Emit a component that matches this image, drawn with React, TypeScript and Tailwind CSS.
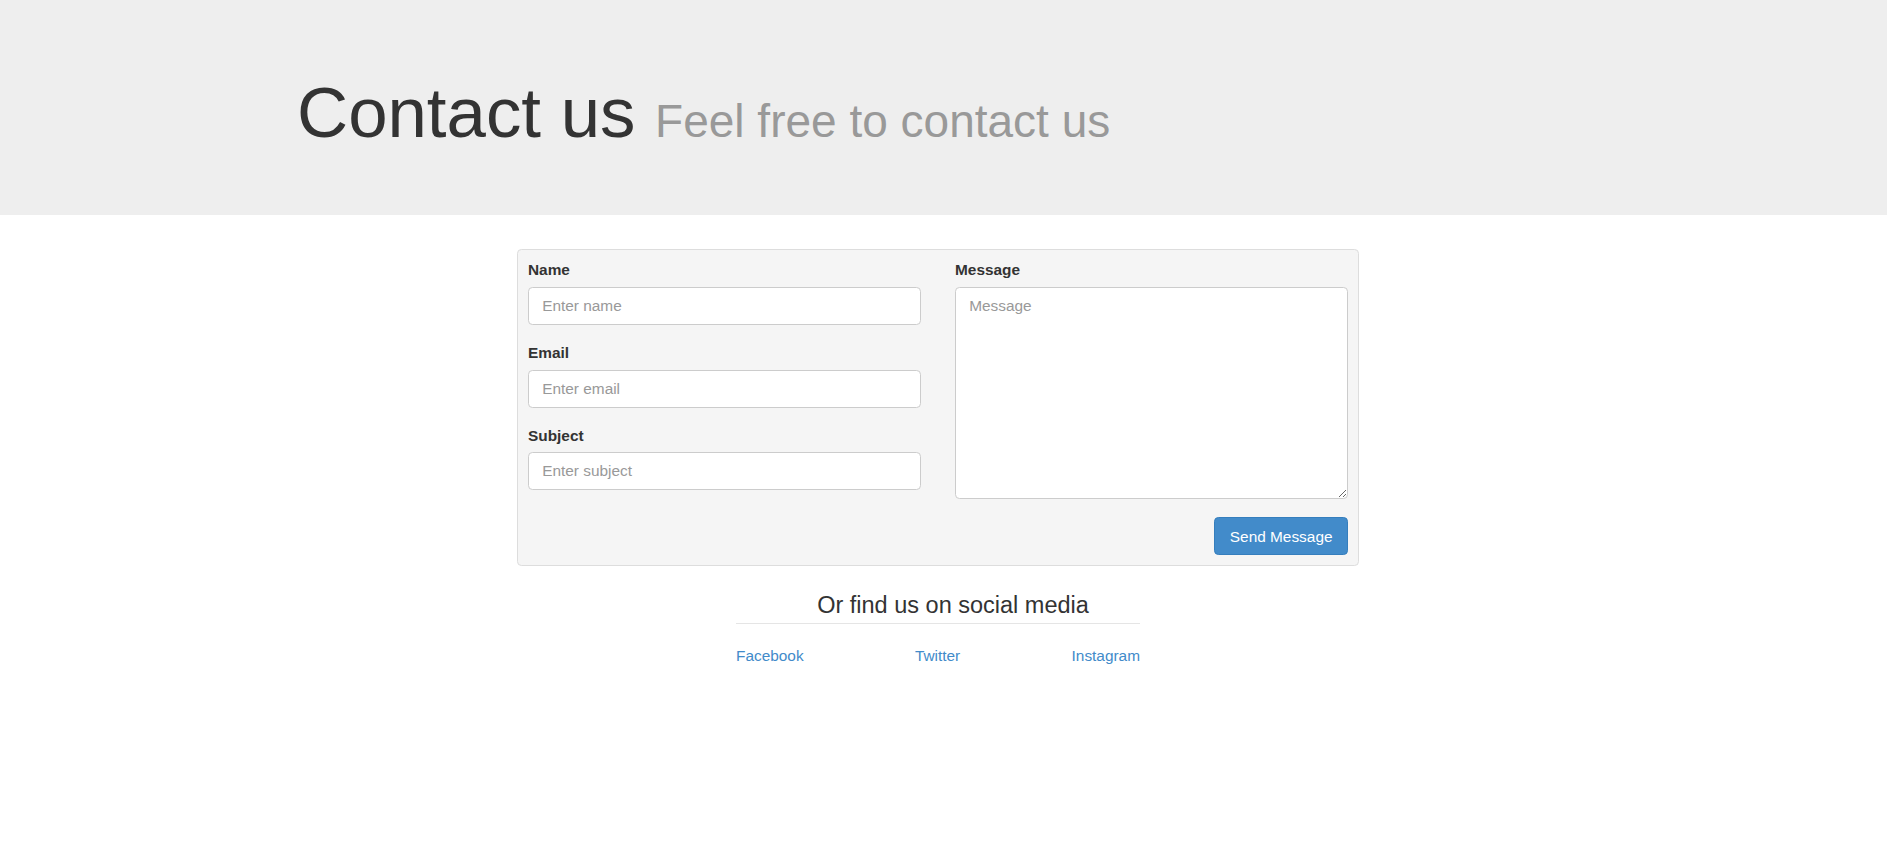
import { useState } from "react";

const font = { fontFamily: '"Liberation Sans", Arial, sans-serif' };

export default function App() {
  const [name, setName] = useState("");
  const [email, setEmail] = useState("");
  const [subject, setSubject] = useState("");
  const [message, setMessage] = useState("");

  const inputCls =
    "block w-full h-[38px] rounded-[4.4px] border border-[#cccccc] bg-white px-[13.2px] text-[15.4px] text-[#555555] placeholder:text-[#999999] outline-none";

  return (
    <div className="min-h-[850px] bg-white text-[#333333]" style={font}>
      {/* Jumbotron */}
      <div className="bg-[#eeeeee] py-[52.8px]">
        <div className="mx-auto w-[1293px]">
          <h1 className="mt-[22px] mb-[11px] h-[76.2px] text-[70.8px] leading-[76.2px] font-normal text-[#333333]">
            Contact us{" "}
            <small className="text-[46px] leading-none text-[#999999]">Feel free to contact us</small>
          </h1>
        </div>
      </div>

      <div className="mx-auto w-[1293px]">
        {/* Form panel */}
        <form
          onSubmit={(e) => e.preventDefault()}
          className="ml-[220px] mt-[34.6px] w-[842px] rounded-[4.4px] border border-[#dddddd] bg-[#f5f5f5] px-[10px] pt-[9px] pb-[10px]"
        >
          <div className="grid grid-cols-2 gap-x-[34px]">
            <div>
              <div className="mb-[17px]">
                <label htmlFor="name" className="mb-[5.7px] block text-[15.4px] leading-[22px] font-bold">
                  Name
                </label>
                <input
                  id="name"
                  type="text"
                  placeholder="Enter name"
                  value={name}
                  onChange={(e) => setName(e.target.value)}
                  className={inputCls}
                />
              </div>
              <div className="mb-[17px]">
                <label htmlFor="email" className="mb-[5.7px] block text-[15.4px] leading-[22px] font-bold">
                  Email
                </label>
                <input
                  id="email"
                  type="email"
                  placeholder="Enter email"
                  value={email}
                  onChange={(e) => setEmail(e.target.value)}
                  className={inputCls}
                />
              </div>
              <div className="mb-[17px]">
                <label htmlFor="subject" className="mb-[5.7px] block text-[15.4px] leading-[22px] font-bold">
                  Subject
                </label>
                <input
                  id="subject"
                  type="text"
                  placeholder="Enter subject"
                  value={subject}
                  onChange={(e) => setSubject(e.target.value)}
                  className={inputCls}
                />
              </div>
            </div>
            <div>
              <div className="mb-[18px]">
                <label htmlFor="message" className="mb-[5.7px] block text-[15.4px] leading-[22px] font-bold">
                  Message
                </label>
                <textarea
                  id="message"
                  placeholder="Message"
                  value={message}
                  onChange={(e) => setMessage(e.target.value)}
                  className="block h-[212.3px] w-full rounded-[4.4px] border border-[#cccccc] bg-white px-[13.2px] py-[6.6px] text-[15.4px] leading-[22px] text-[#555555] placeholder:text-[#999999] outline-none"
                />
              </div>
            </div>
          </div>
          <div className="flex justify-end">
            <button
              type="submit"
              className="h-[37.4px] rounded-[4.4px] border border-[#357ebd] bg-[#428bca] px-[14.5px] text-[15.4px] text-white"
            >
              Send Message
            </button>
          </div>
        </form>

        {/* Social */}
        <div className="ml-[439px] mt-[27px] w-[404px]">
          <h3 className="border-b border-[#e5e5e5] pb-[4px] pl-[30px] text-center text-[23.5px] leading-[1.1] font-normal text-[#333333]">
            Or find us on social media
          </h3>
          <div className="mt-[21px] flex justify-between text-[15.4px] leading-[22px]">
            <a href="#" className="text-[#428bca]">Facebook</a>
            <a href="#" className="text-[#428bca]">Twitter</a>
            <a href="#" className="text-[#428bca]">Instagram</a>
          </div>
        </div>
      </div>
    </div>
  );
}
